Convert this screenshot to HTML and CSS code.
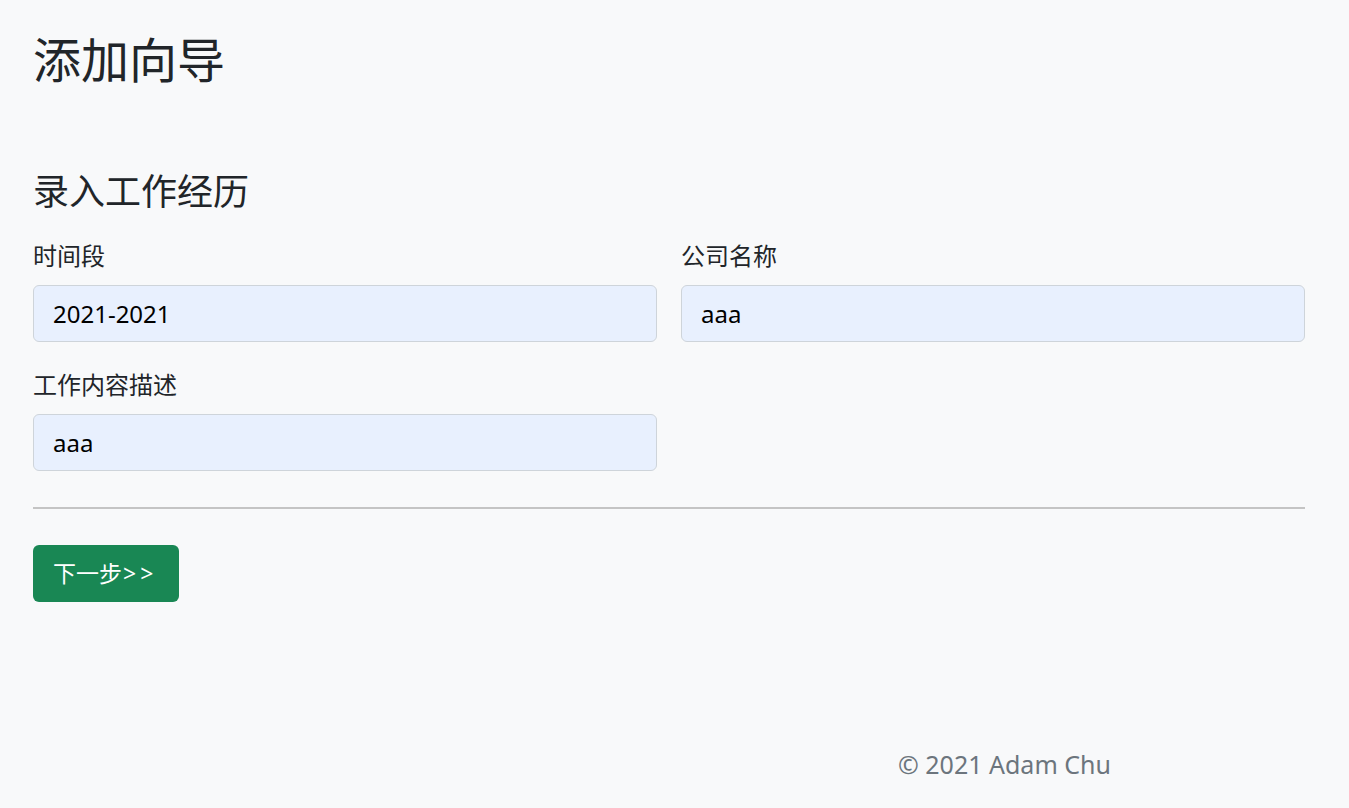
FILE: index.html
```html
<!DOCTYPE html>
<html lang="zh-CN">
<head>
<meta charset="utf-8">
<title>添加向导</title>
<link rel="stylesheet" href="styles.css">
</head>
<body>
<main class="page">
  <h1 class="title">添加向导</h1>
  <h2 class="subtitle">录入工作经历</h2>
  <form class="form">
    <div class="grid">
      <div class="field">
        <label class="label">时间段</label>
        <input class="input" type="text" value="2021-2021">
      </div>
      <div class="field">
        <label class="label">公司名称</label>
        <input class="input" type="text" value="aaa">
      </div>
      <div class="field">
        <label class="label">工作内容描述</label>
        <input class="input" type="text" value="aaa">
      </div>
    </div>
    <hr class="divider">
    <button type="button" class="btn">下一步<span class="arrows">&gt;&gt;</span></button>
  </form>
  <footer class="footer">© 2021 Adam Chu</footer>
</main>
</body>
</html>
```

FILE: styles.css
```css
* { box-sizing: border-box; }
html, body { margin: 0; padding: 0; }
body {
  background: #f8f9fa;
  color: #212529;
  font-family: "Noto Sans", "Noto Sans CJK SC", sans-serif;
}
.page {
  width: 1272px;
  margin-left: 33px;
  padding-top: 30px;
}
.title {
  margin: 0;
  font-size: 48px;
  font-weight: 400;
  line-height: 60px;
}
.subtitle {
  margin: 80px 0 0;
  font-size: 36px;
  font-weight: 400;
  line-height: 44px;
}
.form { margin-top: 24px; }
.grid {
  display: grid;
  grid-template-columns: 1fr 1fr;
  column-gap: 24px;
  row-gap: 25px;
}
.field { display: flex; flex-direction: column; gap: 11px; }
.label {
  font-size: 24px;
  line-height: 36px;
  height: 36px;
}
.input {
  height: 57px;
  width: 100%;
  background: #e8f0fe;
  border: 1px solid #ced4da;
  border-radius: 6px;
  padding: 0 19px;
  font-family: inherit;
  font-size: 24px;
  color: #000;
  outline: none;
}
.divider {
  margin: 36px 0;
  border: 0;
  border-top: 2px solid #c4c4c4;
  height: 0;
}
.btn {
  display: block;
  height: 57px;
  width: 146px;
  background: #198754;
  border: 0;
  border-radius: 6px;
  color: #fff;
  font-family: inherit;
  font-size: 23px;
  line-height: 30px;
  padding: 0 0 2px 20px;
  text-align: left;
}
.arrows {
  letter-spacing: 4px;
  margin-left: 1px;
}
.footer {
  margin-top: 144px;
  margin-left: 865px;
  font-size: 25px;
  line-height: 36px;
  color: #6c757d;
}
```
